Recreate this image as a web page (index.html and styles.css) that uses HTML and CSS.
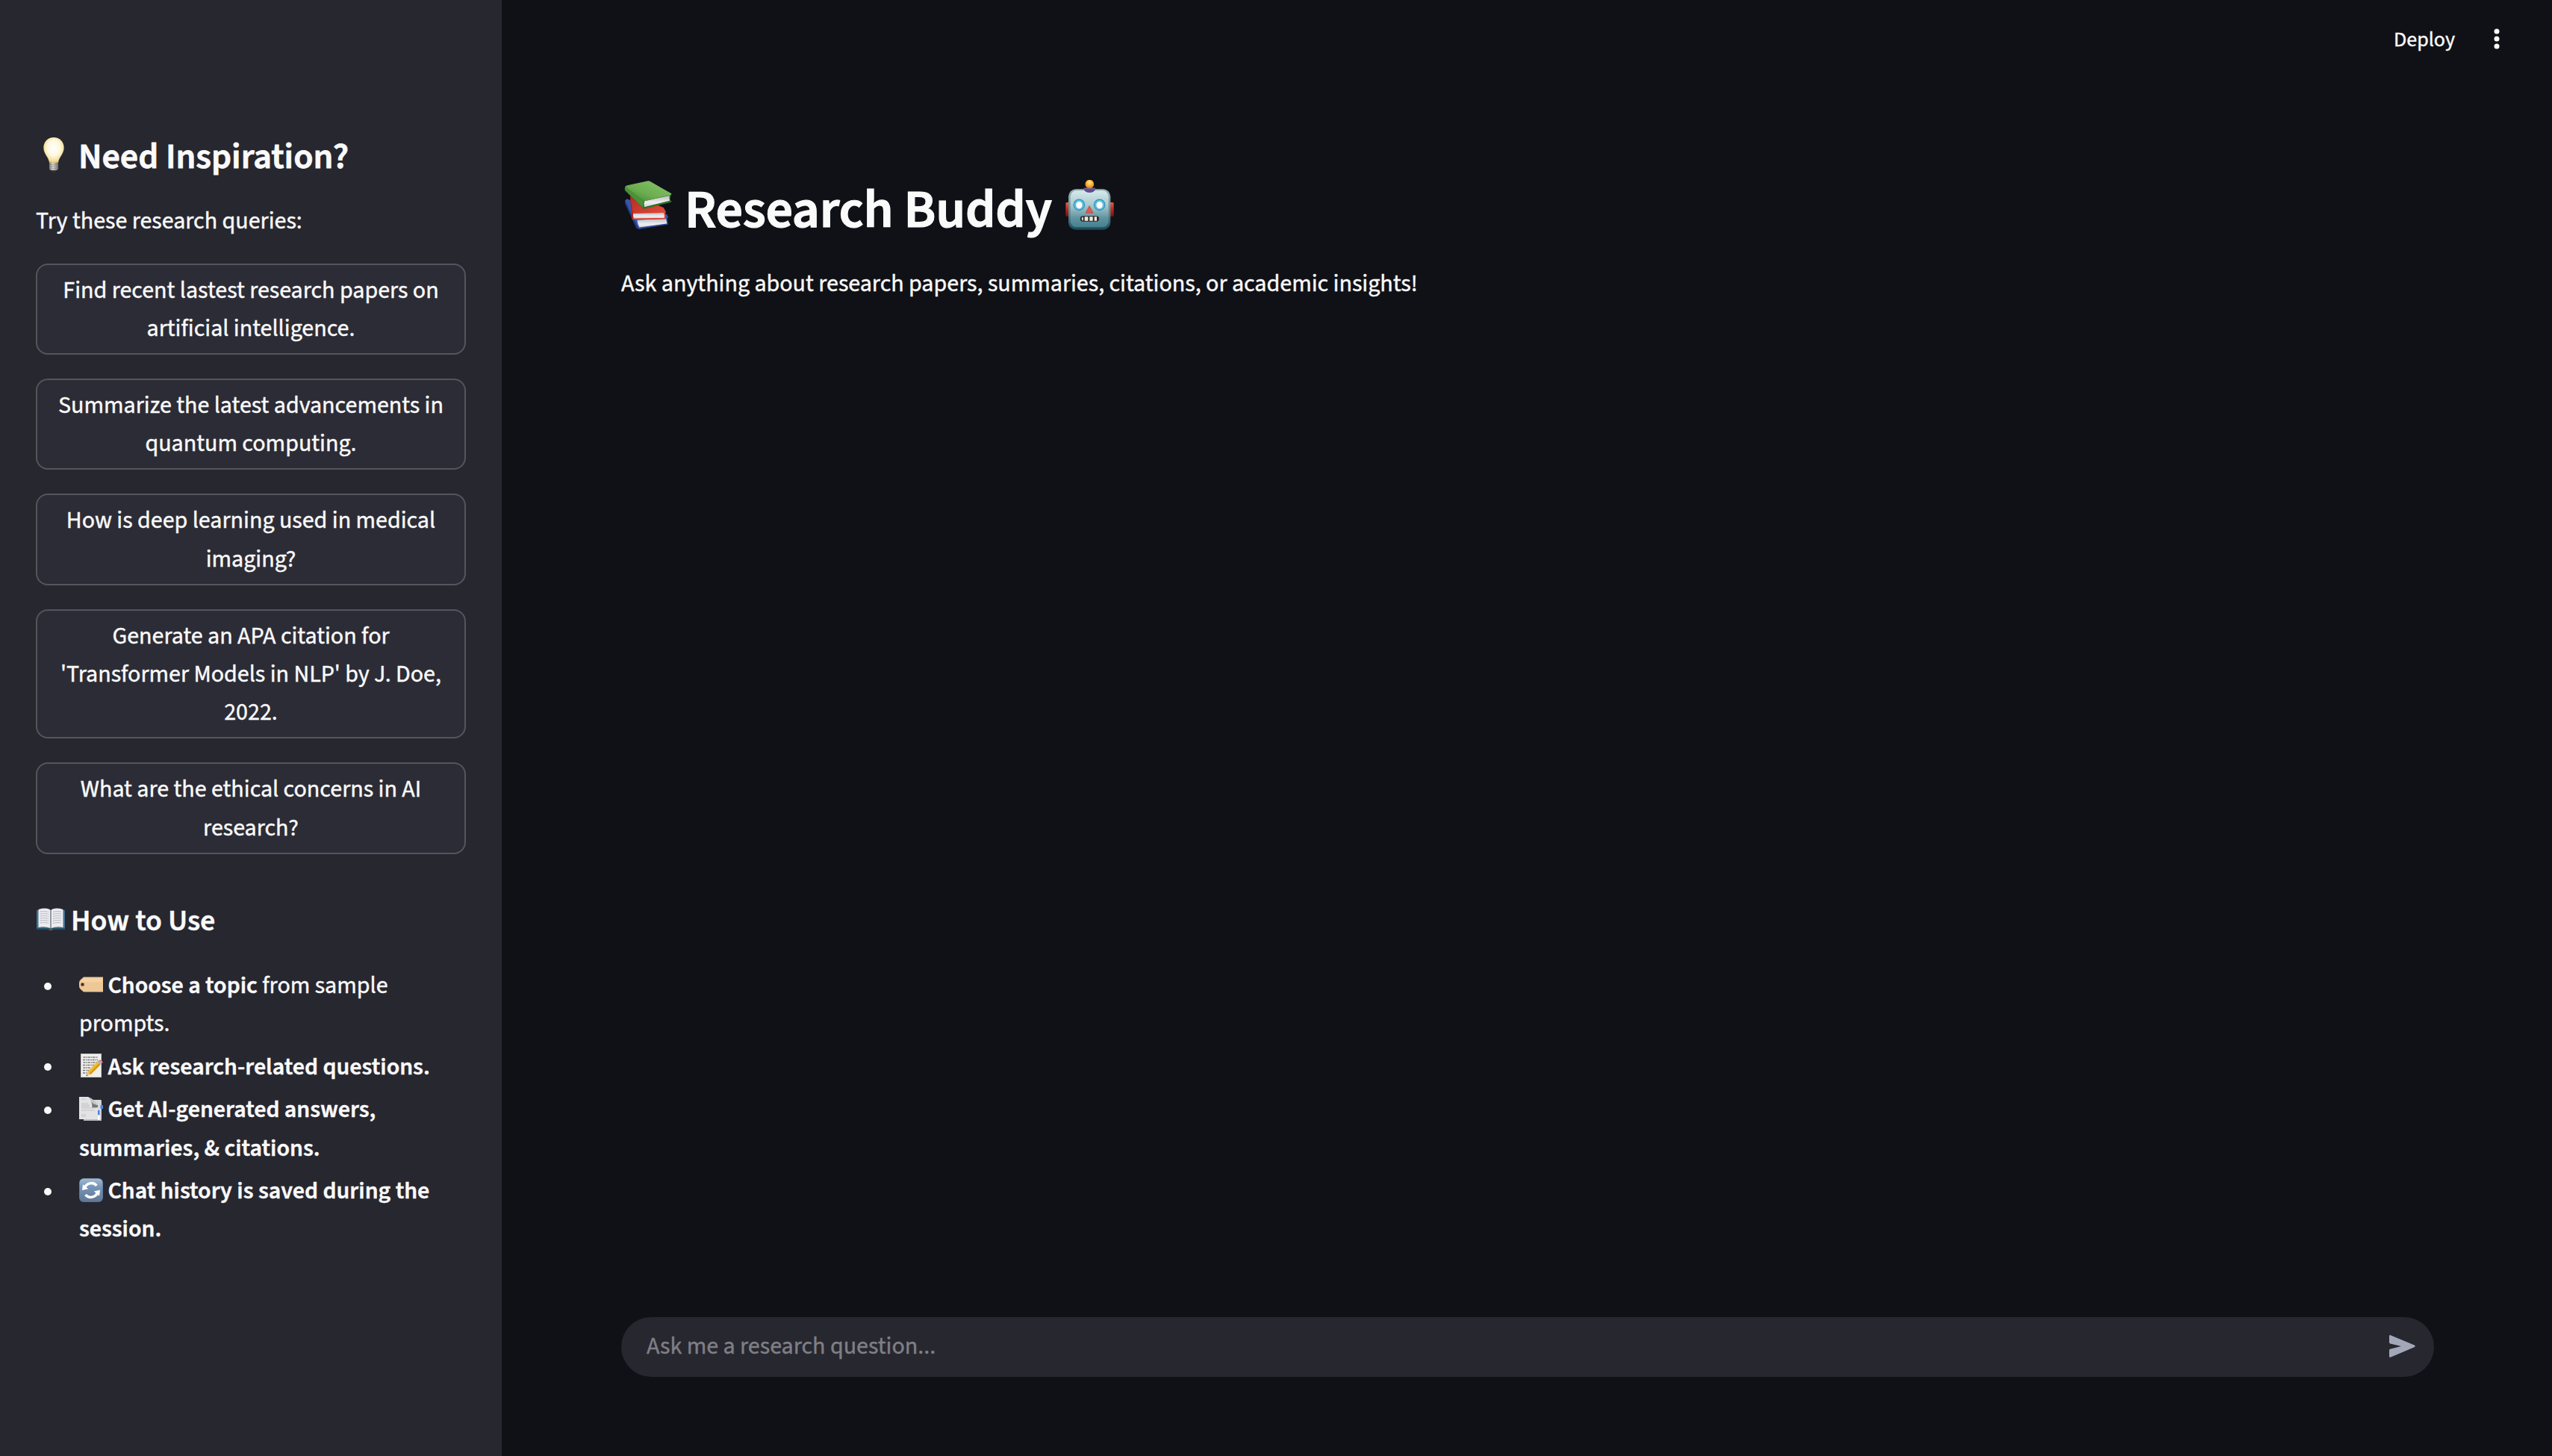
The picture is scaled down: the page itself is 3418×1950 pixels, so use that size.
FILE: index.html
```html
<!DOCTYPE html>
<html lang="en">
<head>
<meta charset="utf-8">
<title>Research Buddy</title>
<link rel="stylesheet" href="styles.css">
</head>
<body>
<div class="app">
  <aside class="sidebar">
    <h2 class="sidebar-title">
      <svg class="icon-bulb" viewBox="54 42 84 141" aria-hidden="true">
        <defs>
          <radialGradient id="glass" cx=".5" cy=".42" r=".6"><stop offset="0" stop-color="#fffffb"/><stop offset=".5" stop-color="#fdf8e2"/><stop offset=".85" stop-color="#f3dd95"/><stop offset="1" stop-color="#d9b95c"/></radialGradient>
          <linearGradient id="screw"><stop offset="0" stop-color="#77756f"/><stop offset=".4" stop-color="#dedcd8"/><stop offset="1" stop-color="#6d6b66"/></linearGradient>
        </defs>
        <path fill="url(#glass)" d="M96 42c-24 0-41 18-41 42 0 14 7 25 14 36 5 8 8 16 9 24h36c1-8 4-16 9-24 7-11 14-22 14-36 0-24-17-42-41-42z"/>
        <path fill="url(#screw)" d="M78 143h36v24q-2 7-8 8H86q-6-1-8-8z"/>
        <path stroke="#8d8b86" stroke-width="2" d="M78 152l36-2M78 160l36-2M79 168l35-2"/>
        <path fill="#33343a" d="M85 174h22l-5 9H90z"/>
      </svg>
      <span>Need Inspiration?</span>
    </h2>
    <p class="sidebar-lead">Try these research queries:</p>
    <div class="prompts">
      <button class="prompt">Find recent lastest research papers on artificial intelligence.</button>
      <button class="prompt">Summarize the latest advancements in quantum computing.</button>
      <button class="prompt">How is deep learning used in medical imaging?</button>
      <button class="prompt">Generate an APA citation for 'Transformer Models in NLP' by J. Doe, 2022.</button>
      <button class="prompt">What are the ethical concerns in AI research?</button>
    </div>
    <h3 class="howto-title">
      <svg class="icon-book" viewBox="0 0 40 32" aria-hidden="true">
        <path fill="#3f7291" d="M1 3h38v26H23q-3 2.500-6 0H1z"/>
        <path fill="#25516d" d="M1 27h38v2H23q-3 2.500-6 0H1z"/>
        <path fill="#ececf0" d="M3.500 2Q14-1 19.500 2.500V27Q12 24 3.500 26z"/>
        <path fill="#ececf0" d="M36.500 2Q26-1 20.500 2.500V27q7.500-3 16-1z"/>
        <path fill="none" stroke="#a9a9b0" stroke-width="1" stroke-dasharray="2.500 .7" d="M6 5q6-1 11 .5M6 8q6-1 11 .5M6 11q6-1 11 .5M6 14q6-1 11 .5M6 17q6-1 11 .5M6 20q6-1 11 .5M23 5.500q5-1.500 11-.5M23 8.500q5-1.500 11-.5M23 11.500q5-1.500 11-.5M23 14.500q5-1.500 11-.5M23 17.500q5-1.500 11-.5M23 20.500q5-1.500 11-.5"/>
        <path stroke="#8a8a92" d="M20 3v24"/>
        <path fill="#5f5d37" d="M18 27h4v3h-4z"/>
      </svg>
      <span>How to Use</span>
    </h3>
    <ul class="howto">
      <li><div><strong><svg class="icon" viewBox="0 0 32 32" aria-hidden="true"><path fill="#edc795" d="M6 5.500h26v20H6l-4-3.500q-2-2-2-4v-5q0-2 2-4z"/><path fill="#f6d9ae" d="M6.500 6.500H31v6H2q.5-2 2-3.500z" opacity=".6"/><circle cx="4.500" cy="15.500" r="2.500" fill="#8a5f4a"/><circle cx="4.500" cy="15.500" r="1.400" fill="#32262a"/></svg> Choose a topic</strong> from sample prompts.</div></li>
      <li><div><strong><svg class="icon" viewBox="0 0 32 32" aria-hidden="true"><path fill="#c9c9c4" d="M2 0h28v32H2z"/><path fill="#efefeb" d="M3 1h26v30H3z"/><path fill="none" stroke="#75757a" stroke-width="1.300" stroke-dasharray="3 1 1.500 .8" d="M5.500 5H25M5 8.500h20M5.500 12H24M5 15.500h15M5.500 19H15M5 22.500h8M5 26h6"/><path fill="#f2bd2f" d="M24 11l4.500 4L15.500 28l-4.700-3.500z"/><path fill="#d79a1c" d="M26.500 13.200l2 1.800L15.500 28l-2.200-1.600z"/><path fill="#e3c39a" d="M10.800 24.500l4.700 3.500L9.500 30.300z"/><path fill="#3c3b3b" d="M10 28.300l1.600 1.200-2.100.8z"/><path fill="#a9b1b8" d="M24 11l1.700-1.700 4.500 4L28.500 15z"/><path fill="#e07c84" d="M25.700 9.300q2-1.500 4.500.3 2.500 2 .5 3.500z"/></svg> Ask research-related questions.</strong></div></li>
      <li><div><strong><svg class="icon" viewBox="0 0 32 32" aria-hidden="true"><path fill="#b9babc" d="M6 5h24v27H6z"/><path fill="#d7d8da" d="M14 4h15.500v26H14z"/><path fill="#4a86e0" d="M25 18h2.500v6H25zM28.500 11H32v5h-3.500z"/><path fill="#fff" d="M25 25h2.500v6H25z"/><path fill="#e3e3e5" d="M0 0h12q3 1 4 6 1 4 9 8v16H0z"/><path fill="#77787b" d="M16 6q3 4 9 5v3q-5 1-8 0 1-3-1-8z"/><path fill="#c2c3c6" d="M12 0q7 2 13 11-7-1-9-5-1-5-4-6z"/><path fill="none" stroke="#c3c3c6" d="M3 3h6M3 9h9M3 11h11M3 13h11M3 15h18M3 18h18M3 24h6M3 26h6"/></svg> Get AI-generated answers, summaries, &amp; citations.</strong></div></li>
      <li><div><strong><svg class="icon" viewBox="0 0 32 32" aria-hidden="true"><defs><linearGradient id="tile" x2="0" y2="1"><stop offset="0" stop-color="#a3b9d1"/><stop offset=".35" stop-color="#7796b9"/><stop offset="1" stop-color="#5f7894"/></linearGradient></defs><rect width="32" height="32" rx="6" fill="#566f8c"/><rect x=".6" y=".6" width="30.800" height="30.400" rx="5.500" fill="url(#tile)"/><path fill="none" stroke="#fff" stroke-width="3.400" d="M7.200 13.500a9.500 9.500 0 0 1 16.300-3.700M24.800 18.500a9.500 9.500 0 0 1-16.300 3.700"/><path fill="#fff" d="M5 8.200L4 16l8.200-1.800zM27 23.800l1-8-8.200 1.800z"/></svg> Chat history is saved during the session.</strong></div></li>
    </ul>
  </aside>
  <main class="main">
    <header class="toolbar">
      <span class="deploy">Deploy</span>
      <svg class="icon-menu" viewBox="0 0 8 28" aria-hidden="true"><circle cx="4" cy="4" r="3.500"/><circle cx="4" cy="14" r="3.500"/><circle cx="4" cy="24" r="3.500"/></svg>
    </header>
    <section class="intro">
      <h1 class="title">
        <svg class="icon-books" viewBox="24 18 192 198" aria-hidden="true">
          <defs>
            <linearGradient id="green" x1="1" x2="0" y2="1"><stop offset="0" stop-color="#8cc56f"/><stop offset=".6" stop-color="#6aad4f"/><stop offset="1" stop-color="#3b7d2a"/></linearGradient>
            <linearGradient id="red" y2="1"><stop offset="0" stop-color="#b52b23"/><stop offset="1" stop-color="#e4523f"/></linearGradient>
            <linearGradient id="page" x2="0" y2="1"><stop offset="0" stop-color="#bcbcc0"/><stop offset=".6" stop-color="#efeff1"/><stop offset="1" stop-color="#cfcfd3"/></linearGradient>
          </defs>
          <path fill="#3556ad" d="M27 98l8-7 160 62 7 12-6 4 4 24-119 19-8-4z"/>
          <path fill="#1f3680" d="M27 98l52 108 2 6-9-4L27 110z"/>
          <path fill="url(#page)" d="M76 176l116-6 4 21-110 17q-8-14-10-32z"/>
          <path fill="#2a479a" d="M80 206l120-16v4L81 213z"/>
          <path fill="url(#red)" d="M48 80l10-4 124 50 10 18-3 4v24l-128 3-6-4z"/>
          <path fill="#a3211b" d="M48 80l10 62 3 28-6-3z"/>
          <path fill="url(#page)" d="M60 150l123-3q4 10 2 22l-122 1q-5-9-3-20z"/>
          <path fill="#d5392d" d="M58 170l131-2v4l-128 3z"/>
          <path fill="#2d6b22" d="M28 42l-2 14 76 75 110-26 2-6-6-2 4-24z"/>
          <path fill="url(#page)" d="M106 100l100-22q-2 11 1 20l-102 26q-4-12 1-24z"/>
          <path fill="#4c9138" d="M28 42l-2 8 3 8 72 70q-4-16 3-28z"/>
          <path fill="url(#green)" d="M28 42q2-4 12-6l80-17q6 0 10 3l84 48-2 5-108 25z"/>
          <path fill="#2f7424" d="M101 127l113-28v3l-110 29z"/>
        </svg>
        <span>Research Buddy</span>
        <svg class="icon-robot" viewBox="21 15 195 201" aria-hidden="true">
          <defs>
            <linearGradient id="face" x2="0" y2="1"><stop offset="0" stop-color="#d5e9ea"/><stop offset=".4" stop-color="#a9c9cd"/><stop offset=".75" stop-color="#5f93a0"/><stop offset="1" stop-color="#43818f"/></linearGradient>
            <linearGradient id="rim" x2="0" y2="1"><stop offset="0" stop-color="#9bb5b7"/><stop offset=".6" stop-color="#5c8792"/><stop offset="1" stop-color="#1c4a58"/></linearGradient>
            <radialGradient id="lamp" cx=".5" cy=".3" r=".7"><stop offset="0" stop-color="#ffe98a"/><stop offset=".5" stop-color="#fbb534"/><stop offset="1" stop-color="#e07a18"/></radialGradient>
            <linearGradient id="ear" x2="0" y2="1"><stop offset="0" stop-color="#e8594d"/><stop offset=".5" stop-color="#b52a22"/><stop offset="1" stop-color="#6f1512"/></linearGradient>
          </defs>
          <rect x="22" y="105" width="22" height="57" rx="5" fill="url(#ear)"/>
          <rect x="193" y="105" width="22" height="57" rx="5" fill="url(#ear)"/>
          <rect x="33" y="52" width="169" height="163" rx="30" fill="url(#rim)"/>
          <rect x="41" y="58" width="153" height="147" rx="24" fill="url(#face)"/>
          <path fill="#5d4f86" d="M94 47h48q-2 19-24 19t-24-19z"/>
          <circle cx="118" cy="32" r="17.500" fill="url(#lamp)"/>
          <path fill="#7565a3" d="M96 47h44l-6 5h-32z"/>
          <g stroke="#2f91bd" stroke-width="4" fill="#5fcbee"><circle cx="76" cy="115" r="21.500"/><circle cx="158" cy="115" r="21.500"/></g>
          <g stroke="#c7eaf5" stroke-width="3" fill="#fff"><ellipse cx="76" cy="116" rx="13" ry="14.500"/><ellipse cx="158" cy="116" rx="13" ry="14.500"/></g>
          <g stroke="#3f86a5" stroke-width="1.500" fill="none"><ellipse cx="76" cy="116" rx="14.500" ry="16"/><ellipse cx="158" cy="116" rx="14.500" ry="16"/></g>
          <path fill="#dc5a52" stroke="#b0423f" stroke-width="2" stroke-linejoin="round" d="M117 119l15 29h-30z"/>
          <rect x="80" y="160" width="76" height="22" rx="11" fill="#2b2a2d"/>
          <path fill="#eceadf" d="M88 164h4v14h-4q-4-7 0-14zM98 163h14v16H98zM118 163h13v16h-13zM137 163h10v16h-10z"/>
        </svg>
      </h1>
      <p class="subtitle">Ask anything about research papers, summaries, citations, or academic insights!</p>
    </section>
    <form class="chat">
      <span class="placeholder">Ask me a research question...</span>
      <svg class="icon-send" viewBox="0 0 35 30" aria-hidden="true"><path d="M1.800.2L33.600 13.400q2.400 1.400 0 2.900L1.800 29.800Q0 30.200 0 28.500V20.300q0-1.300 1.300-1.600L16 15 1.300 11.500Q0 11.100 0 9.800V1.500Q0-.2 1.800.2z"/></svg>
    </form>
  </main>
</div>
</body>
</html>
```
FILE: styles.css
```css
* { box-sizing: border-box; }

body {
  margin: 0;
  background: #101116;
  color: #fafafa;
  font-family: "Source Sans 3", "Source Sans Pro", "Noto Sans CJK SC", sans-serif;
  font-size: 32px;
  line-height: 51.2px;
  -webkit-text-stroke: 0.4px;
}

h1, h2, h3, p, ul { margin: 0; padding: 0; font-weight: inherit; }

.app { display: flex; height: 1950px; }

/* Sidebar */
.sidebar {
  width: 672px;
  flex: none;
  padding: 182px 48px 0;
  background: #272730;
}

.sidebar-title {
  display: flex;
  align-items: flex-start;
  height: 57.6px;
  margin-bottom: 31.8px;
  font-size: 48px;
  font-weight: 600;
  line-height: 57.6px;
  -webkit-text-stroke: 0.8px;
}
.icon-bulb { width: 28px; height: 47px; margin: 2px 19px 0 10px; }

.sidebar-lead { margin-bottom: 30px; }

.prompts { display: flex; flex-direction: column; gap: 32px; }
.prompt {
  width: 100%;
  padding: 9px 24px 7px;
  border: 2px solid #54555d;
  border-radius: 16px;
  background: #2c2c36;
  color: inherit;
  font: inherit;
  text-align: center;
}

.howto-title {
  display: flex;
  align-items: flex-start;
  height: 48px;
  margin: 66.2px 0 37px;
  font-size: 40px;
  font-weight: 600;
  line-height: 48px;
}
.icon-book { width: 40px; height: 32px; margin: 6px 7px 0 0; }

.howto { display: flex; flex-direction: column; gap: 6.4px; list-style: none; }
.howto li { display: grid; grid-template-columns: 58px 1fr; }
.howto li::before {
  content: "";
  width: 10px;
  height: 10px;
  margin: 20.5px 0 0 11px;
  border-radius: 50%;
  background: #fafafa;
}
.howto strong { font-weight: 600; }
.icon { width: 32px; height: 32px; vertical-align: -4.5px; }

/* Main column */
.main {
  flex: 1;
  display: flex;
  flex-direction: column;
  padding: 0 158px 106px 160px;
}

.toolbar {
  display: flex;
  align-items: flex-start;
  justify-content: flex-end;
  height: 120px;
  margin-right: -88px;
  padding-top: 28px;
}
.deploy { margin-right: 52px; font-size: 28px; }
.icon-menu { width: 8px; height: 28px; margin-top: 10px; fill: #fafafa; }

.intro { flex: 1; padding-top: 119px; }
.title {
  display: flex;
  align-items: flex-start;
  height: 86.4px;
  margin-bottom: 29.7px;
  font-size: 72px;
  font-weight: 600;
  letter-spacing: -0.3px;
  line-height: 86.4px;
  -webkit-text-stroke: 1.2px;
}
.icon-books { width: 64px; height: 66px; margin: 3px 17px 0 4px; }
.icon-robot { width: 65px; height: 67px; margin: 2px 0 0 18px; }

/* Chat input */
.chat {
  display: flex;
  align-items: flex-start;
  justify-content: space-between;
  height: 80px;
  padding: 14px 25px 0 34px;
  border-radius: 40px;
  background: #272730;
}
.placeholder { color: #7f7f84; }
.icon-send { width: 35px; height: 30px; margin-top: 10px; fill: #a3a8b8; }
```
